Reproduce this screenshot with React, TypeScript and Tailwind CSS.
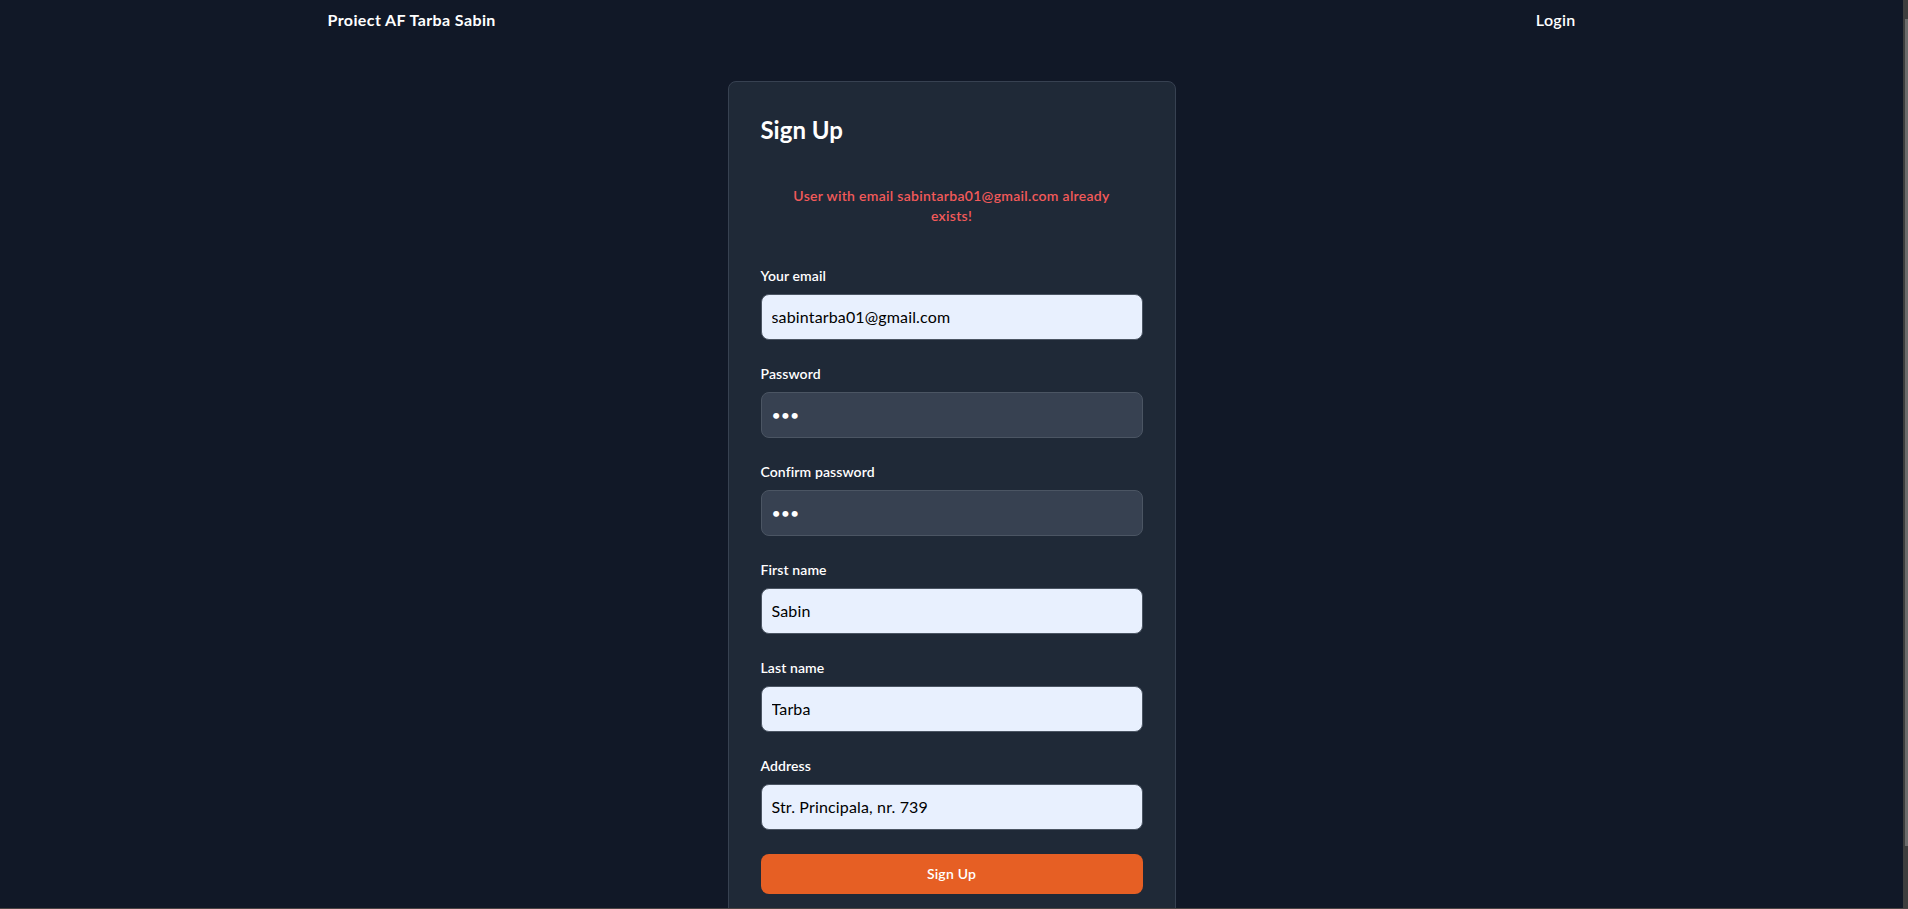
const font = "font-['Lato','Noto_Sans',sans-serif]";

function Field({
  label,
  type,
  value,
  filled,
}: {
  label: string;
  type: string;
  value: string;
  filled?: boolean;
}) {
  return (
    <div>
      <label className="mb-2 block text-sm font-semibold tracking-[0.1px] text-white">{label}</label>
      <input
        type={type}
        defaultValue={value}
        className={
          filled
            ? "block w-full rounded-lg border border-[#4b5563] bg-[#e8f0fe] p-2.5 text-base tracking-[0.15px] text-black outline-none"
            : "block w-full rounded-lg border border-[#4b5563] bg-[#374151] p-2.5 text-base text-white outline-none"
        }
      />
    </div>
  );
}

export default function App() {
  return (
    <div className={`flex h-[909px] flex-col bg-[#111827] ${font}`}>
      <div className="flex min-h-0 flex-1">
        <main className="min-w-0 flex-1 overflow-hidden">
          <nav className="mx-auto flex max-w-screen-xl items-center justify-between px-4 py-2">
            <span className="text-base font-bold leading-6 tracking-[0.4px] text-white">Proiect AF Tarba Sabin</span>
            <span className="text-base font-semibold leading-6 tracking-[0.3px] text-white">Login</span>
          </nav>

          <div className="mx-auto mt-[41px] w-full max-w-md rounded-lg border border-[#374151] bg-[#1f2937]">
            <div className="space-y-6 p-8">
              <h1 className="text-2xl font-bold text-white">Sign Up</h1>
              <form className="space-y-6">
                <div className="p-4 text-center text-sm font-semibold tracking-[0.3px] text-[#f25a5a]">
                  User with email sabintarba01@gmail.com already exists!
                </div>
                <Field label="Your email" type="email" value="sabintarba01@gmail.com" filled />
                <Field label="Password" type="password" value="abc" />
                <Field label="Confirm password" type="password" value="abc" />
                <Field label="First name" type="text" value="Sabin" filled />
                <Field label="Last name" type="text" value="Tarba" filled />
                <Field label="Address" type="text" value="Str. Principala, nr. 739" filled />
                <button
                  type="button"
                  className="w-full rounded-lg bg-[#e65f24] px-5 py-2.5 text-center text-sm font-semibold tracking-[0.2px] text-white"
                >
                  Sign Up
                </button>
              </form>
            </div>
          </div>
        </main>

        {/* scrollbar */}
        <div className="flex w-[5px] flex-col bg-[#3e3e3e] pt-[19px] pb-[62px] pl-[2px]">
          <div className="flex-1 bg-[#6b6b6b]" />
        </div>
      </div>
      <div className="h-px bg-[#4a4444]" />
    </div>
  );
}
